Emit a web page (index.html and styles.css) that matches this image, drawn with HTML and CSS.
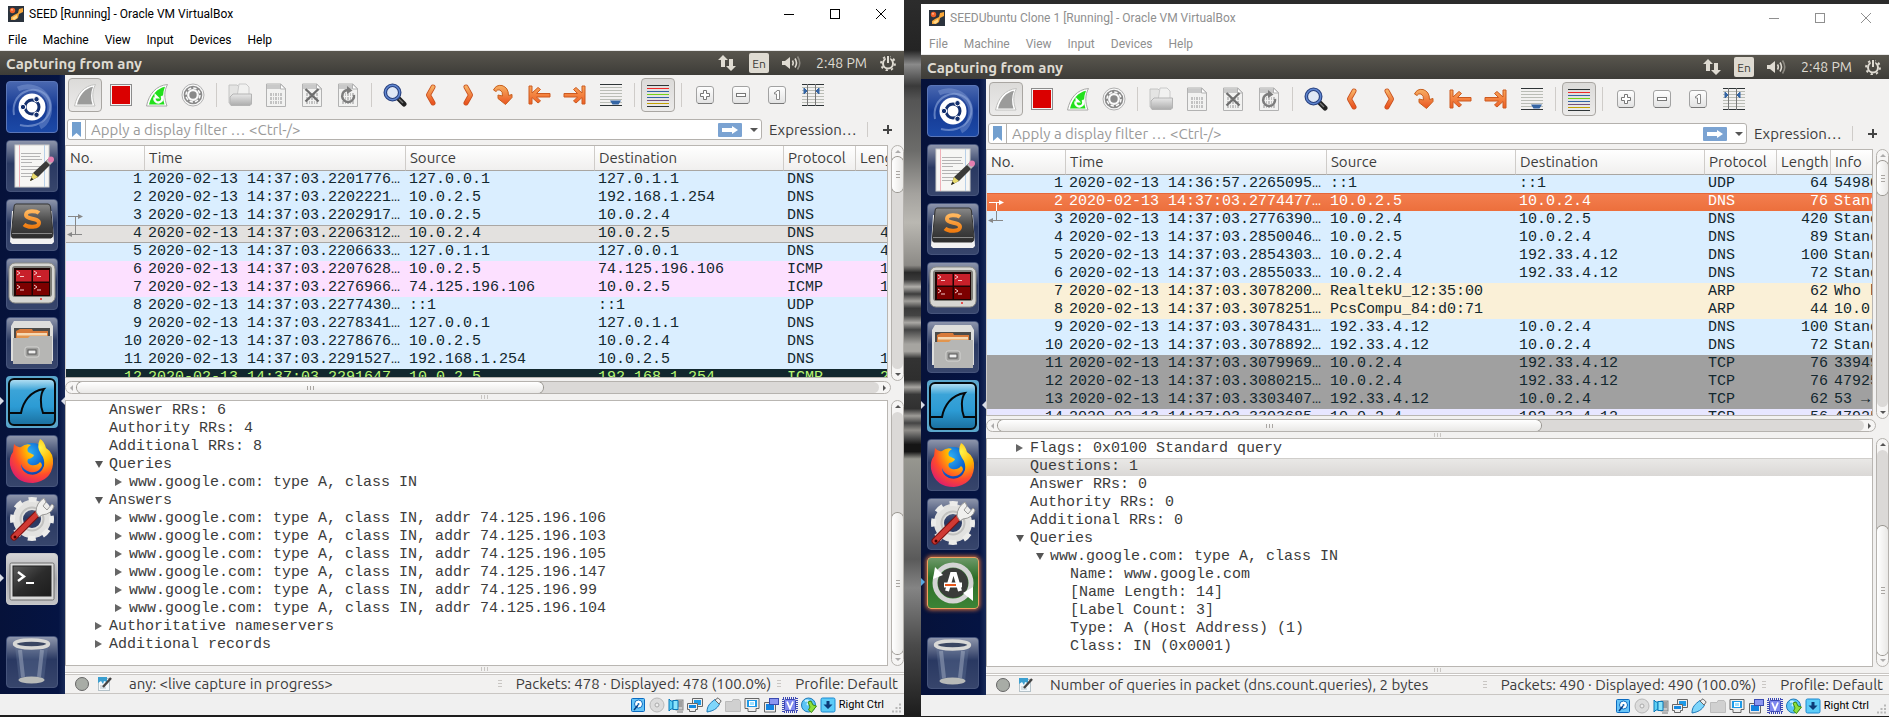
FILE: index.html
```html
<!DOCTYPE html>
<html lang="en">
<head>
<meta charset="utf-8">
<title>Capturing from any</title>
<link rel="stylesheet" href="styles.css">
</head>
<body>
<svg class="sprite" aria-hidden="true">
  <defs>
    <linearGradient id="g-orange" x1="0" y1="0" x2="0" y2="1"><stop offset="0" stop-color="#f7b064"/><stop offset="1" stop-color="#ea5420"/></linearGradient>
    <linearGradient id="g-orange-px" gradientUnits="userSpaceOnUse" x1="0" y1="2" x2="0" y2="22"><stop offset="0" stop-color="#f9a95c"/><stop offset="1" stop-color="#ee5a22"/></linearGradient>
    <linearGradient id="g-grey" x1="0" y1="0" x2="0" y2="1"><stop offset="0" stop-color="#e8e8e8"/><stop offset="1" stop-color="#acacac"/></linearGradient>
    <linearGradient id="g-key" x1="0" y1="0" x2="0" y2="1"><stop offset="0" stop-color="#fff"/><stop offset="1" stop-color="#e2e2e2"/></linearGradient>
    <linearGradient id="g-gloss" x1="0" y1="0" x2="0" y2="1"><stop offset="0" stop-color="#fff" stop-opacity=".5"/><stop offset=".45" stop-color="#fff" stop-opacity=".06"/><stop offset="1" stop-color="#fff" stop-opacity=".12"/></linearGradient>
    <linearGradient id="g-blue-tile" x1="0" y1="0" x2="0" y2="1"><stop offset="0" stop-color="#4a68b0"/><stop offset=".5" stop-color="#153a94"/><stop offset="1" stop-color="#1c4aa8"/></linearGradient>
    <linearGradient id="g-dark" x1="0" y1="0" x2="0" y2="1"><stop offset="0" stop-color="#8a8a8a"/><stop offset=".5" stop-color="#4a4a4a"/><stop offset="1" stop-color="#2c2c2c"/></linearGradient>
    <linearGradient id="g-shark" x1="0" y1="0" x2="0" y2="1"><stop offset="0" stop-color="#b9e2f4"/><stop offset=".25" stop-color="#3ba4d8"/><stop offset=".6" stop-color="#2c9bd4"/><stop offset="1" stop-color="#1a6f9e"/></linearGradient>
    <linearGradient id="g-steel" x1="0" y1="0" x2="0" y2="1"><stop offset="0" stop-color="#d6d6d8"/><stop offset=".5" stop-color="#a9a9ac"/><stop offset="1" stop-color="#c4c4c6"/></linearGradient>
    <linearGradient id="g-screen" x1="0" y1="0" x2="1" y2="1"><stop offset="0" stop-color="#5c5c5c"/><stop offset=".5" stop-color="#2c2c2c"/><stop offset="1" stop-color="#1c1c1c"/></linearGradient>
    <linearGradient id="g-green" x1="0" y1="0" x2="0" y2="1"><stop offset="0" stop-color="#6f9a6a"/><stop offset=".4" stop-color="#2c6e28"/><stop offset="1" stop-color="#3c8436"/></linearGradient>
    <linearGradient id="g-s" x1="0" y1="0" x2="0" y2="1"><stop offset="0" stop-color="#ffb75e"/><stop offset="1" stop-color="#f07c10"/></linearGradient>
    <radialGradient id="g-fox" cx=".7" cy=".2" r=".95"><stop offset="0" stop-color="#fff44a"/><stop offset=".35" stop-color="#ffb400"/><stop offset=".65" stop-color="#ff4a2c"/><stop offset="1" stop-color="#d4127e"/></radialGradient>
    <radialGradient id="g-globe" cx=".4" cy=".3" r=".8"><stop offset="0" stop-color="#2fb6f6"/><stop offset=".6" stop-color="#0a62d0"/><stop offset="1" stop-color="#1a2a8a"/></radialGradient>
  </defs>

  <symbol id="vbox" viewBox="0 0 16 16"><rect width="16" height="16" fill="#2b333d"/><path d="M3 14V11L6 9L10 7L11 3L15 2V6L11 8L10 12L7 14Z" fill="#f9a83a"/><path d="M4 12L9 9L9 12L6 14Z" fill="#ffd88a"/><circle cx="4.500" cy="4.500" r="2.700" fill="#f0622a"/><circle cx="4" cy="3.800" r="1" fill="#ffb08a"/></symbol>
  <symbol id="win-min" viewBox="0 0 10 10"><path d="M0 5.500H10" stroke="currentColor"/></symbol>
  <symbol id="win-max" viewBox="0 0 10 10"><rect x=".5" y=".5" width="9" height="9" fill="none" stroke="currentColor"/></symbol>
  <symbol id="win-close" viewBox="0 0 10 10"><path d="M0 0L10 10M10 0L0 10" stroke="currentColor"/></symbol>

  <symbol id="net" viewBox="0 0 18 18"><path d="M5 1L10 6H7V13H3V6H0Z" fill="#dfdbd2"/><path d="M13 17L18 12H15V5H11V12H8Z" fill="#dfdbd2"/></symbol>
  <symbol id="sound" viewBox="0 0 20 16"><path d="M0 6H3L8 2V14L3 10H0Z" fill="#dfdbd2"/><path d="M10.500 5.500Q12 8 10.500 10.500M13 3.500Q16 8 13 12.500" fill="none" stroke="#dfdbd2" stroke-width="1.600"/><path d="M15.500 1.500Q20 8 15.500 14.500" fill="none" stroke="#8d8a82" stroke-width="1.600"/></symbol>
  <symbol id="power" viewBox="0 0 16 16"><circle cx="8" cy="8.500" r="5" fill="none" stroke="#dfdbd2" stroke-width="2"/><circle cx="8" cy="8.500" r="6.900" fill="none" stroke="#dfdbd2" stroke-width="2" stroke-dasharray="2.300 3.120"/><path d="M8 0V8" stroke="#4a4842" stroke-width="4.500"/><path d="M8 1V8" stroke="#dfdbd2" stroke-width="2"/></symbol>

  <symbol id="t-fin" viewBox="0 0 24 24"><path d="M1.500 23C4 11 11 2.500 22.500 1.500C19 8 19 15 22 23Z" fill="#fff" stroke="#c2c2c0"/><path d="M4 21.500C6.500 12 12 5.500 20 3.800C17.500 10 17.500 16 19.500 21.500Z" fill="#9b9b9a"/></symbol>
  <symbol id="t-stop" viewBox="0 0 24 24"><rect x="1.500" y="1.500" width="21" height="21" fill="#f4f4f4" stroke="#8c8c8c"/><rect x="3" y="3" width="18" height="18" fill="#da0000"/></symbol>
  <symbol id="t-restart" viewBox="0 0 24 24"><path d="M1.500 23C4 11 11 2.500 22.500 1.500C19 8 19 15 22 23Z" fill="#fff" stroke="#a8a8a6"/><path d="M4 21.500C6.500 12 12 5.500 20 3.800C17.500 10 17.500 16 19.500 21.500Z" fill="#22e01c"/><path d="M9.500 14.500A4 4 0 1 0 16.500 13" fill="none" stroke="#fff" stroke-width="2.400"/><path d="M9.500 10V15.500H15Z" fill="#fff"/></symbol>
  <symbol id="t-gear" viewBox="0 0 24 24"><circle cx="12" cy="12" r="11" fill="#fafafa" stroke="#b0b0b0"/><circle cx="12" cy="12" r="9.300" fill="#8a8a8a"/><circle cx="12" cy="12" r="7" fill="none" stroke="#fafafa" stroke-width="1.500" stroke-dasharray="3.400 2.100"/><circle cx="12" cy="12" r="4.800" fill="none" stroke="#fafafa" stroke-width="2.200"/></symbol>
  <symbol id="t-open" viewBox="0 0 24 24"><path d="M1 2H9L12 5V20H1Z" fill="#e4e4e3" stroke="#c4c4c4"/><path d="M11 1H18L21 4V14H9Z" fill="#f1f1f0" stroke="#cacaca"/><path d="M5 11H23.500V21L22 22.500H3L2 21V14Z" fill="url(#g-grey)" stroke="#b4b4b4"/></symbol>
  <symbol id="t-doc" viewBox="0 0 24 24"><path d="M2.500 1H17L21.500 5.500V23.500H2.500Z" fill="#f2f2f1" stroke="#b2b2b2"/><path d="M3 1.500H16.500L18 6H3Z" fill="#c9c9c9"/><path d="M16.500 1V6H21.500Z" fill="#fff" stroke="#b2b2b2"/><path d="M6 11.500H19M6 15.500H19M6 19.500H19" stroke="#c2c2c2" stroke-width="3" stroke-dasharray="2 1 1 1"/></symbol>
  <symbol id="t-close" viewBox="0 0 24 24"><use href="#t-doc"/><path d="M5.500 6L18.500 18.500M18.500 6L5.500 18.500" stroke="#6e6e6e" stroke-width="2.400"/></symbol>
  <symbol id="t-reload" viewBox="0 0 24 24"><use href="#t-doc"/><path d="M12 7A6 6 0 1 0 18 12" fill="none" stroke="#7c7c7c" stroke-width="2.400"/><path d="M11 3L16.500 7.500L11 11Z" fill="#7c7c7c"/></symbol>
  <symbol id="t-find" viewBox="0 0 24 24"><path d="M15 15L21 21" stroke="#222" stroke-width="5" stroke-linecap="round"/><path d="M16 16L20 20" stroke="#777" stroke-width="1.500"/><circle cx="9.500" cy="9.500" r="7.200" fill="#dfe8f6" stroke="#28407e" stroke-width="3.600"/><circle cx="9.500" cy="9.500" r="7.200" fill="none" stroke="#5f86d0" stroke-width="1.400"/></symbol>
  <symbol id="t-prev" viewBox="0 0 24 24"><path d="M14 4L9.500 12L14 20" fill="none" stroke="#c8501e" stroke-width="5" stroke-linecap="round" stroke-linejoin="round"/><path d="M14 4L9.500 12L14 20" fill="none" stroke="url(#g-orange)" stroke-width="3.400" stroke-linecap="round" stroke-linejoin="round"/></symbol>
  <symbol id="t-next" viewBox="0 0 24 24"><path d="M11 4L15.500 12L11 20" fill="none" stroke="#c8501e" stroke-width="5" stroke-linecap="round" stroke-linejoin="round"/><path d="M11 4L15.500 12L11 20" fill="none" stroke="url(#g-orange)" stroke-width="3.400" stroke-linecap="round" stroke-linejoin="round"/></symbol>
  <symbol id="t-goto" viewBox="0 0 24 24"><path d="M2.500 7Q5 1.500 11 2.500Q17.500 4.500 17.500 12.500L21 11.500V14.500L14.500 21.500L7 15.500V12L11.500 13Q12 8.500 9 7Q6.500 6 5 8.500Z" fill="url(#g-orange)" stroke="#c8601e" stroke-linejoin="round"/></symbol>
  <symbol id="t-first" viewBox="0 0 24 24"><path d="M2 3H5V10L11 4.500L13.500 6.500L9.500 10.500H23V14H9.500L13.500 18L11 20L5 14.500V21H2Z" fill="url(#g-orange-px)" stroke="#cc5a20" stroke-linejoin="round"/></symbol>
  <symbol id="t-last" viewBox="0 0 24 24"><path d="M22 3H19V10L13 4.500L10.500 6.500L14.500 10.500H1V14H14.500L10.500 18L13 20L19 14.500V21H22Z" fill="url(#g-orange-px)" stroke="#cc5a20" stroke-linejoin="round"/></symbol>
  <symbol id="t-auto" viewBox="0 0 24 24"><path d="M1 1.500H23M1 22.500H23" stroke="#2e3436"/><path d="M1 4.500H23M1 7.500H23M1 10.500H23M1 13.500H23M1 16.500H23M1 19.500H23" stroke="#babdb6"/><path d="M11 17.500H22L19.500 21.500H13.500Z" fill="#3465a4"/></symbol>
  <symbol id="t-color" viewBox="0 0 24 24"><path d="M1 2.500H23M1 23.500H23" stroke="#2e3436"/><path d="M1 5.500H23" stroke="#ef2929"/><path d="M1 8.500H23" stroke="#3465a4"/><path d="M1 11.500H23" stroke="#73d216"/><path d="M1 14.500H23" stroke="#3465a4"/><path d="M1 17.500H23" stroke="#75507b"/><path d="M1 20.500H23" stroke="#c4a000"/></symbol>
  <symbol id="t-key" viewBox="0 0 24 24"><rect x="3.500" y="3.500" width="17" height="17" rx="2.500" fill="url(#g-key)" stroke="#a2a2a2"/><path d="M5 20.500H19" stroke="#777"/></symbol>
  <symbol id="t-plus" viewBox="0 0 24 24"><use href="#t-key"/><path d="M10.500 7.500H13.500V10.500H16.500V13.500H13.500V16.500H10.500V13.500H7.500V10.500H10.500Z" fill="#fff" stroke="#777"/></symbol>
  <symbol id="t-minus" viewBox="0 0 24 24"><use href="#t-key"/><rect x="7.500" y="10.500" width="9" height="3" fill="#fff" stroke="#777"/></symbol>
  <symbol id="t-one" viewBox="0 0 24 24"><use href="#t-key"/><path d="M12 7.500H14.500V16.500H11.500V11H9.500V9.500Q11.500 9.500 12 7.500Z" fill="#fff" stroke="#888"/></symbol>
  <symbol id="t-resize" viewBox="0 0 24 24"><path d="M1 1.500H23M1 22.500H23" stroke="#2e3436"/><path d="M1 4.500H23M1 7.500H23M1 10.500H23M1 13.500H23M1 16.500H23M1 19.500H23" stroke="#babdb6"/><path d="M6.500 1V23M14.500 1V23" stroke="#777"/><path d="M3 5V11L6 8ZM18 5V11L15 8Z" fill="#3465a4" stroke="#3465a4"/></symbol>

  <symbol id="mark" viewBox="0 0 9 15"><path d="M0 0H9V15L4.500 11L0 15Z" fill="#729fcf"/></symbol>
  <symbol id="apply" viewBox="0 0 24 14"><rect width="24" height="14" rx="1" fill="#7ba3d2"/><path d="M4 5H14V3L20 7L14 11V9H4Z" fill="#fff"/></symbol>
  <symbol id="link-start" viewBox="0 0 18 18"><path d="M2 9.500H13M9.500 9.500V18" fill="none" stroke="currentColor"/><path d="M12 7L17 9.500L12 12Z" fill="currentColor"/></symbol>
  <symbol id="link-end" viewBox="0 0 18 18"><path d="M16 9.500H5M9.500 0V9.500" fill="none" stroke="currentColor"/><path d="M6 7L1 9.500L6 12Z" fill="currentColor"/></symbol>
  <symbol id="note" viewBox="0 0 14 14"><rect x=".5" y="1.500" width="11" height="12" fill="#f3f8fb" stroke="#b5c2c9"/><path d="M0 0H9V5L6 4L5 7L3 4L0 6Z" fill="#3a9fd0"/><path d="M2 9H6M2 11H8" stroke="#b5c2c9"/><path d="M13 1L5 10" stroke="#444" stroke-width="2.400"/></symbol>

  <!-- launcher -->
  <symbol id="tile" viewBox="0 0 52 52"><rect x=".5" y=".5" width="51" height="51" rx="3.500" fill="#1c2c58" stroke="#46547b"/><rect x="1" y="1" width="50" height="50" rx="3" fill="url(#g-gloss)"/></symbol>
  <symbol id="l-dash" viewBox="0 0 52 52"><rect x=".5" y=".5" width="51" height="51" rx="3.500" fill="url(#g-blue-tile)" stroke="#5a76b8"/><path d="M8 34C4 12 28 2 40 14C52 28 38 50 14 44" fill="none" stroke="#8fa8dc" stroke-opacity=".6" stroke-width="2"/><path d="M12 8C28 0 50 14 42 36C40 42 38 44 34 46" fill="none" stroke="#8fa8dc" stroke-opacity=".4" stroke-width="5"/><circle cx="26" cy="26" r="13.500" fill="#fff"/><circle cx="26" cy="26" r="7" fill="none" stroke="#14306e" stroke-width="3"/><g fill="#14306e" stroke="#fff"><circle cx="17" cy="26" r="2.700"/><circle cx="30.500" cy="18.200" r="2.700"/><circle cx="30.500" cy="33.800" r="2.700"/></g></symbol>
  <symbol id="l-edit" viewBox="0 0 52 52"><use href="#tile"/><rect x="9" y="5" width="34" height="42" fill="#f6f6f4" stroke="#cfcfcc"/><path d="M13.500 5V47" stroke="#f0b0b8"/><path d="M38.500 5V47" stroke="#b8d0e8"/><path d="M15 13.500H35M15 16.500H34M15 19.500H36M15 22.500H26M15 26.500H36M15 29.500H34M15 33.500H30M15 36.500H26" stroke="#b4b4b4"/><path d="M24 41L27 33L42 19L46 23L32 37Z" fill="#3a3a38"/><path d="M24 41L27 33L32 37Z" fill="#e8da6a"/><path d="M24 41L25.500 37.500L27.500 39.500Z" fill="#222"/><path d="M40 21L43 18L47 22L44 25Z" fill="#bbb"/><circle cx="45" cy="19.500" r="3" fill="#e47fb0"/></symbol>
  <symbol id="l-subl" viewBox="0 0 52 52"><use href="#tile"/><path d="M6 12H46L48 43L46 45H6L4 43Z" fill="#f2f2f2"/><path d="M10 5H42Q44 5 44.500 8L47 34Q47 39 45 39H7Q5 39 5.500 34L8 8Q8 5 10 5Z" fill="url(#g-dark)" stroke="#333"/><path d="M6 34.500H46" stroke="#888"/><path d="M33 14C30 11.500 20 11 20 16C20 21 33 18.500 33 24C33 28.500 22 29 18 25.500" fill="none" stroke="url(#g-s)" stroke-width="4"/></symbol>
  <symbol id="l-multi" viewBox="0 0 52 52"><use href="#tile"/><rect x="3" y="5" width="46" height="40" rx="6" fill="#d6d6d2" stroke="#8c8c86"/><rect x="6" y="8" width="40" height="31" rx="3" fill="#7c7c76"/><rect x="8" y="10" width="36" height="28" fill="#1e0404"/><rect x="10" y="12" width="15.500" height="11.500" fill="#c8202a"/><rect x="27" y="12" width="16" height="11.500" fill="#c8202a"/><rect x="10" y="25" width="15.500" height="12" fill="#7c0000"/><rect x="27" y="25" width="16" height="12" fill="#7c0000"/><path d="M11 13L14 15L11 17M28 13L31 15L28 17M11 27L14 29L11 31M28 27L31 29L28 31M14 18.500H18M31 18.500H35M14 32H18M31 32H35" fill="none" stroke="#f4c8c8"/><circle cx="35" cy="41" r="1" fill="#e82020"/></symbol>
  <symbol id="l-files" viewBox="0 0 52 52"><use href="#tile"/><path d="M8 4H44L47 9V44H5V9Z" fill="#dededc"/><rect x="8" y="11" width="36" height="12" fill="#4c4c4a"/><path d="M10 14L14 12H26L27 14H42V22H10Z" fill="#d87a3a"/><path d="M11 16H41V22H11Z" fill="#f5d9b4"/><path d="M11 18.500H41V22H11Z" fill="#e2954e"/><path d="M7 21H22L24 19H46V47H7Z" fill="#b6b6b4"/><rect x="19" y="30" width="14" height="10" rx="2" fill="#9e9e9c" stroke="#d4d4d2"/><rect x="22" y="33" width="8" height="4" fill="#eee" stroke="#555"/></symbol>
  <symbol id="l-shark" viewBox="0 0 52 52"><rect width="52" height="52" rx="4" fill="#5aa6cc"/><rect x="3" y="3" width="46" height="46" rx="5" fill="url(#g-shark)" stroke="#05090c" stroke-width="2"/><path d="M4 37H15C17 26 24 15 38 13C34 18 34 29 37 37H48" fill="none" stroke="#05090c" stroke-width="2"/></symbol>
  <symbol id="l-fox" viewBox="0 0 52 52"><use href="#tile"/><circle cx="26" cy="25" r="17" fill="url(#g-globe)"/><path d="M8 9Q11 13 15 12Q20 8 25 10Q20 13 22 17L28 20Q27 23 22 24Q20 28 25 30Q31 31 34 27Q38 30 34 34Q30 38 24 37Q17 35 15 29Q15 36 22 39Q34 42 38 31Q39 24 35 19Q30 12 34 4Q38 6 40 13Q48 18 47 29Q45 46 27 48Q8 48 4 30Q3 22 7 17Z" fill="url(#g-fox)"/></symbol>
  <symbol id="l-set" viewBox="0 0 52 52"><use href="#tile"/><circle cx="26" cy="25" r="14" fill="none" stroke="#e2e2e0" stroke-width="10"/><circle cx="26" cy="25" r="19.500" fill="none" stroke="#ececea" stroke-width="5" stroke-dasharray="8 7.315" stroke-dashoffset="4"/><circle cx="26" cy="25" r="11.500" fill="none" stroke="#c2c2c0" stroke-width="2"/><path d="M8 43L31 20" stroke="#7c1010" stroke-width="7" stroke-linecap="round"/><path d="M8 43L31 20" stroke="#d03a34" stroke-width="5" stroke-linecap="round"/><path d="M30 18Q30 9 38 4L40 8L37 12L41 16L46 10L48 12Q46 20 36 21L33 23Z" fill="#f0f0ee" stroke="#9a9a98"/><circle cx="9" cy="43" r="1.500" fill="#400"/></symbol>
  <symbol id="l-term" viewBox="0 0 52 52"><rect x=".5" y=".5" width="51" height="51" rx="3.500" fill="url(#g-steel)" stroke="#c8c8ca"/><rect x="4" y="10" width="44" height="37" rx="1.500" fill="#dadada" stroke="#6e6e6e"/><rect x="7" y="13" width="38" height="30" fill="url(#g-screen)" stroke="#222"/><path d="M12 19L18 23.500L12 28" fill="none" stroke="#fff" stroke-width="2.400"/><path d="M20 30H28" stroke="#fff" stroke-width="2"/></symbol>
  <symbol id="l-upd" viewBox="0 0 52 52"><rect x=".5" y=".5" width="51" height="51" rx="3.500" fill="url(#g-green)" stroke="#f0a060"/><circle cx="26" cy="26" r="15" fill="#3a3c3a"/><circle cx="26" cy="26" r="18" fill="none" stroke="#d4d4d4" stroke-width="5"/><path d="M6 22L8 10L16 18ZM46 30L46 44L36 36Z" fill="#fff"/><path d="M20 34L25 17H28L33 34" fill="none" stroke="#fff" stroke-width="4"/><path d="M17 28H35" stroke="#fff" stroke-width="5"/><path d="M18 28H29" stroke="#e8581c" stroke-width="2"/></symbol>
  <symbol id="l-trash" viewBox="0 0 52 52"><use href="#tile"/><path d="M9 10L13 44Q25 50 38 44L42 10Z" fill="#6f84a4" fill-opacity=".3"/><path d="M14 14L17 41M36 14L33 41" stroke="#dfe6f0" stroke-opacity=".3" stroke-width="4"/><ellipse cx="25.500" cy="44" rx="13" ry="3.500" fill="#b8bab8"/><ellipse cx="25.500" cy="8" rx="17" ry="4" fill="#3a4662" stroke="#d8d8d6" stroke-width="3.400"/></symbol>

  <!-- machine status bar -->
  <symbol id="s-disk" viewBox="0 0 16 16"><rect x="1.500" y="1.500" width="13" height="13" rx="1" fill="#66c4f8" stroke="#0a6ac0"/><circle cx="8.500" cy="7" r="4" fill="#fff" stroke="#0a6ac0"/><circle cx="8.500" cy="7" r="1" fill="#0a6ac0"/><path d="M4 13L8 8" stroke="#0a3a80" stroke-width="1.500"/></symbol>
  <symbol id="s-cd" viewBox="0 0 16 16"><circle cx="8" cy="8" r="7" fill="#dcdcdc" stroke="#b8b8b8"/><circle cx="8" cy="8" r="2" fill="#eee" stroke="#aaa"/></symbol>
  <symbol id="s-audio" viewBox="0 0 16 16"><rect x="8" y="3" width="7" height="10" fill="#c8c8c8" stroke="#888"/><path d="M10 5H14M10 7H14M10 9H14M9 15H15" stroke="#777"/><path d="M1 2L3 4H5V12H3L1 14Z" fill="#5cd0f4" stroke="#0a78b8"/><path d="M5 3.500H10V12.500H5Z" fill="#8ae4fb" stroke="#0a78b8"/></symbol>
  <symbol id="s-net" viewBox="0 0 16 16"><path d="M5.500 1.500H15.500V9.500H5.500Z" fill="#eee" stroke="#666"/><rect x="7" y="3" width="7" height="5" fill="#1e9ae8"/><path d="M.5 6.500H10.500V12.500H8.500V14.500H2.500V12.500H.5Z" fill="#eee" stroke="#666"/><rect x="2" y="8" width="7" height="3" fill="#1488e0"/></symbol>
  <symbol id="s-usb" viewBox="0 0 16 16"><path d="M1 15C1 9 4 6 9 2.500L13.500 7C11 12 7 14 1 15Z" fill="#7fd6fb" stroke="#1c78b8"/><path d="M9 3L12 .8L15.200 4L13 7Z" fill="#eee" stroke="#666"/></symbol>
  <symbol id="s-folder" viewBox="0 0 16 16"><path d="M.5 4.500H7L8 2.500H14L15.500 4.500V14.500H.5Z" fill="#d0d0d0" stroke="#bcbcbc"/></symbol>
  <symbol id="s-disp" viewBox="0 0 16 16"><path d="M1 1.500H15V11.500H12V14.500H4V11.500H1Z" fill="#eee" stroke="#666"/><rect x="3" y="3" width="10" height="7" fill="#1e9ae8"/><rect x="5.500" y="4.500" width="5" height="4" fill="#9fe0ff" stroke="#fff"/></symbol>
  <symbol id="s-rec" viewBox="0 0 16 16"><path d="M1.500 5.500H12.500V15H1.500Z" fill="#eee" stroke="#666"/><rect x="3" y="7" width="8" height="6" fill="#1484e0"/><rect x="6.500" y="1.500" width="9" height="6" fill="#8c96f0" stroke="#3a4ab0"/></symbol>
  <symbol id="s-cpu" viewBox="0 0 16 16"><rect x="1" y="1" width="14" height="14" fill="none" stroke="#3c48b4" stroke-width="2" stroke-dasharray="1 1"/><rect x="2.500" y="2.500" width="11" height="11" rx="1" fill="#7f88ee" stroke="#3c48b4"/><path d="M5 4.500L8 11.500L11 4.500" fill="none" stroke="#fff" stroke-width="1.800"/></symbol>
  <symbol id="s-mouse" viewBox="0 0 16 16"><circle cx="7.500" cy="8" r="7" fill="#5cc4f4" stroke="#1c78b8"/><path d="M4 4C8 2 8 6 6 8" fill="none" stroke="#c8f0ff" stroke-width="2"/><path d="M7 5L10 4L12 8L15.500 9L10.500 15.500L7.500 13L9 10Z" fill="#8ee03a" stroke="#3c8a10"/></symbol>
  <symbol id="s-key" viewBox="0 0 16 16"><rect x="1" y="1" width="14" height="14" rx="1.500" fill="#5cccf8" stroke="#1c88d0"/><path d="M6.500 4H9.500V7.500H12.500L8 12L3.500 7.500H6.500Z" fill="#0c3a78"/></symbol>
  <symbol id="s-grip" viewBox="0 0 10 10"><path d="M8 1.500H10M8 5H10M8 8.500H10M4.500 5H6.500M4.500 8.500H6.500M1 8.500H3" stroke="#b8b8b8" stroke-width="2"/></symbol>
</svg>

<main class="desktop">

<section class="vm vm--active">
  <header class="titlebar">
    <svg class="i16"><use href="#vbox"/></svg>
    <h1>SEED [Running] - Oracle VM VirtualBox</h1>
    <div class="wincontrols">
      <button aria-label="Minimize"><svg><use href="#win-min"/></svg></button>
      <button aria-label="Maximize"><svg><use href="#win-max"/></svg></button>
      <button aria-label="Close"><svg><use href="#win-close"/></svg></button>
    </div>
  </header>
  <nav class="menubar"><button>File</button><button>Machine</button><button>View</button><button>Input</button><button>Devices</button><button>Help</button></nav>
  <div class="panel">
    <strong>Capturing from any</strong>
    <div class="indicators">
      <svg class="ind-net"><use href="#net"/></svg><span class="lang">En</span><svg class="ind-sound"><use href="#sound"/></svg><time>2:48 PM</time><svg class="i16"><use href="#power"/></svg>
    </div>
  </div>
  <div class="session">
    <nav class="launcher">
      <a href="#" aria-label="Dash"><svg><use href="#l-dash"/></svg></a>
      <a href="#" aria-label="Text editor"><svg><use href="#l-edit"/></svg></a>
      <a href="#" aria-label="Sublime"><svg><use href="#l-subl"/></svg></a>
      <a href="#" aria-label="Terminator"><svg><use href="#l-multi"/></svg></a>
      <a href="#" aria-label="Files"><svg><use href="#l-files"/></svg></a>
      <a href="#" aria-label="Wireshark" class="running focused"><svg><use href="#l-shark"/></svg></a>
      <a href="#" aria-label="Firefox"><svg><use href="#l-fox"/></svg></a>
      <a href="#" aria-label="Settings"><svg><use href="#l-set"/></svg></a>
      <a href="#" aria-label="Terminal" class="running"><svg><use href="#l-term"/></svg></a>
      <a href="#" aria-label="Trash" class="trash"><svg><use href="#l-trash"/></svg></a>
    </nav>
    <div class="app">
      <div class="toolbar">
        <button class="on" aria-label="Start"><svg><use href="#t-fin"/></svg></button>
        <button aria-label="Stop"><svg><use href="#t-stop"/></svg></button>
        <button aria-label="Restart"><svg><use href="#t-restart"/></svg></button>
        <button aria-label="Options"><svg><use href="#t-gear"/></svg></button>
        <i></i>
        <button aria-label="Open"><svg><use href="#t-open"/></svg></button>
        <button aria-label="Save"><svg><use href="#t-doc"/></svg></button>
        <button aria-label="Close file"><svg><use href="#t-close"/></svg></button>
        <button aria-label="Reload"><svg><use href="#t-reload"/></svg></button>
        <i></i>
        <button aria-label="Find"><svg><use href="#t-find"/></svg></button>
        <button aria-label="Previous"><svg><use href="#t-prev"/></svg></button>
        <button aria-label="Next"><svg><use href="#t-next"/></svg></button>
        <button aria-label="Go to"><svg><use href="#t-goto"/></svg></button>
        <button aria-label="First"><svg><use href="#t-first"/></svg></button>
        <button aria-label="Last"><svg><use href="#t-last"/></svg></button>
        <button aria-label="Auto scroll"><svg><use href="#t-auto"/></svg></button>
        <i></i>
        <button class="on" aria-label="Colorize"><svg><use href="#t-color"/></svg></button>
        <i></i>
        <button aria-label="Zoom in"><svg><use href="#t-plus"/></svg></button>
        <button aria-label="Zoom out"><svg><use href="#t-minus"/></svg></button>
        <button aria-label="Normal size"><svg><use href="#t-one"/></svg></button>
        <button aria-label="Resize columns"><svg><use href="#t-resize"/></svg></button>
      </div>
      <div class="filterbar">
        <div class="filter">
          <button class="mark" aria-label="Bookmarks"><svg><use href="#mark"/></svg></button>
          <input type="text" aria-label="Display filter" placeholder="Apply a display filter … &lt;Ctrl-/&gt;">
          <button class="apply" aria-label="Apply"><svg><use href="#apply"/></svg></button>
          <button class="drop" aria-label="Recent filters"></button>
        </div>
        <button class="expr">Expression…</button>
        <button class="add" aria-label="Add filter button"></button>
      </div>
      <div class="panes">
        <div class="list list--short">
          <div class="grid">
            <table>
              <colgroup><col class="c-no"><col class="c-time"><col class="c-addr"><col class="c-addr"><col class="c-proto"><col class="c-len"></colgroup>
              <thead><tr><th>No.</th><th>Time</th><th>Source</th><th>Destination</th><th>Protocol</th><th>Length</th></tr></thead>
              <tbody>
                <tr class="dns"><td>1</td><td>2020-02-13 14:37:03.2201776…</td><td>127.0.0.1</td><td>127.0.1.1</td><td>DNS</td><td>76</td></tr>
                <tr class="dns"><td>2</td><td>2020-02-13 14:37:03.2202221…</td><td>10.0.2.5</td><td>192.168.1.254</td><td>DNS</td><td>76</td></tr>
                <tr class="dns"><td><svg class="rel"><use href="#link-start"/></svg>3</td><td>2020-02-13 14:37:03.2202917…</td><td>10.0.2.5</td><td>10.0.2.4</td><td>DNS</td><td>76</td></tr>
                <tr class="dns picked"><td><svg class="rel"><use href="#link-end"/></svg>4</td><td>2020-02-13 14:37:03.2206312…</td><td>10.0.2.4</td><td>10.0.2.5</td><td>DNS</td><td>420</td></tr>
                <tr class="dns"><td>5</td><td>2020-02-13 14:37:03.2206633…</td><td>127.0.1.1</td><td>127.0.0.1</td><td>DNS</td><td>420</td></tr>
                <tr class="icmp"><td>6</td><td>2020-02-13 14:37:03.2207628…</td><td>10.0.2.5</td><td>74.125.196.106</td><td>ICMP</td><td>100</td></tr>
                <tr class="icmp"><td>7</td><td>2020-02-13 14:37:03.2276966…</td><td>74.125.196.106</td><td>10.0.2.5</td><td>ICMP</td><td>100</td></tr>
                <tr class="dns"><td>8</td><td>2020-02-13 14:37:03.2277430…</td><td>::1</td><td>::1</td><td>UDP</td><td>64</td></tr>
                <tr class="dns"><td>9</td><td>2020-02-13 14:37:03.2278341…</td><td>127.0.0.1</td><td>127.0.1.1</td><td>DNS</td><td>89</td></tr>
                <tr class="dns"><td>10</td><td>2020-02-13 14:37:03.2278676…</td><td>10.0.2.5</td><td>10.0.2.4</td><td>DNS</td><td>89</td></tr>
                <tr class="dns"><td>11</td><td>2020-02-13 14:37:03.2291527…</td><td>192.168.1.254</td><td>10.0.2.5</td><td>DNS</td><td>100</td></tr>
                <tr class="err"><td>12</td><td>2020-02-13 14:37:03.2291647…</td><td>10.0.2.5</td><td>192.168.1.254</td><td>ICMP</td><td>200</td></tr>
              </tbody>
            </table>
          </div>
          <div class="sb sb--v"><b class="up dim"></b><div class="trough"><span style="flex-grow:34"></span><em style="flex-grow:174"></em></div><b class="down"></b></div>
          <div class="sb sb--h"><b class="left dim"></b><div class="trough"><span style="flex-grow:465"></span><em style="flex-grow:335"></em></div><b class="right"></b></div>
        </div>
        <div class="split"></div>
        <div class="detail detail--tall">
          <ul class="tree">
            <li>Answer RRs: 6</li>
            <li>Authority RRs: 4</li>
            <li>Additional RRs: 8</li>
            <li class="open">Queries</li>
            <li class="shut d2">www.google.com: type A, class IN</li>
            <li class="open">Answers</li>
            <li class="shut d2">www.google.com: type A, class IN, addr 74.125.196.106</li>
            <li class="shut d2">www.google.com: type A, class IN, addr 74.125.196.103</li>
            <li class="shut d2">www.google.com: type A, class IN, addr 74.125.196.105</li>
            <li class="shut d2">www.google.com: type A, class IN, addr 74.125.196.147</li>
            <li class="shut d2">www.google.com: type A, class IN, addr 74.125.196.99</li>
            <li class="shut d2">www.google.com: type A, class IN, addr 74.125.196.104</li>
            <li class="shut">Authoritative nameservers</li>
            <li class="shut">Additional records</li>
          </ul>
          <div class="sb sb--v"><b class="up"></b><div class="trough"><em style="flex-grow:100"></em><span style="flex-grow:139"></span></div><b class="down dim"></b></div>
        </div>
        <div class="split"></div>
      </div>
      <footer class="status">
        <span class="expert"></span><svg class="i14"><use href="#note"/></svg>
        <p>any: &lt;live capture in progress&gt;</p>
        <span class="counts">Packets: 478 · Displayed: 478 (100.0%)</span>
        <span class="profile">Profile: Default</span>
      </footer>
    </div>
  </div>
  <footer class="vmbar">
    <svg class="i16"><use href="#s-disk"/></svg><svg class="i16"><use href="#s-cd"/></svg><svg class="i16"><use href="#s-audio"/></svg><svg class="i16"><use href="#s-net"/></svg><svg class="i16"><use href="#s-usb"/></svg><svg class="i16"><use href="#s-folder"/></svg><svg class="i16"><use href="#s-disp"/></svg><svg class="i16"><use href="#s-rec"/></svg><svg class="i16"><use href="#s-cpu"/></svg><svg class="i16"><use href="#s-mouse"/></svg><svg class="i16"><use href="#s-key"/></svg>
    <span>Right Ctrl</span><svg class="grip"><use href="#s-grip"/></svg>
  </footer>
</section>

<section class="vm vm--idle">
  <header class="titlebar">
    <svg class="i16"><use href="#vbox"/></svg>
    <h1>SEEDUbuntu Clone 1 [Running] - Oracle VM VirtualBox</h1>
    <div class="wincontrols">
      <button aria-label="Minimize"><svg><use href="#win-min"/></svg></button>
      <button aria-label="Maximize"><svg><use href="#win-max"/></svg></button>
      <button aria-label="Close"><svg><use href="#win-close"/></svg></button>
    </div>
  </header>
  <nav class="menubar"><button>File</button><button>Machine</button><button>View</button><button>Input</button><button>Devices</button><button>Help</button></nav>
  <div class="panel">
    <strong>Capturing from any</strong>
    <div class="indicators">
      <svg class="ind-net"><use href="#net"/></svg><span class="lang">En</span><svg class="ind-sound"><use href="#sound"/></svg><time>2:48 PM</time><svg class="i16"><use href="#power"/></svg>
    </div>
  </div>
  <div class="session">
    <nav class="launcher">
      <a href="#" aria-label="Dash"><svg><use href="#l-dash"/></svg></a>
      <a href="#" aria-label="Text editor"><svg><use href="#l-edit"/></svg></a>
      <a href="#" aria-label="Sublime"><svg><use href="#l-subl"/></svg></a>
      <a href="#" aria-label="Terminator"><svg><use href="#l-multi"/></svg></a>
      <a href="#" aria-label="Files"><svg><use href="#l-files"/></svg></a>
      <a href="#" aria-label="Wireshark" class="running focused"><svg><use href="#l-shark"/></svg></a>
      <a href="#" aria-label="Firefox"><svg><use href="#l-fox"/></svg></a>
      <a href="#" aria-label="Settings"><svg><use href="#l-set"/></svg></a>
      <a href="#" aria-label="Software updater" class="running urgent"><svg><use href="#l-upd"/></svg></a>
      <a href="#" aria-label="Trash" class="trash"><svg><use href="#l-trash"/></svg></a>
    </nav>
    <div class="app">
      <div class="toolbar">
        <button class="on" aria-label="Start"><svg><use href="#t-fin"/></svg></button>
        <button aria-label="Stop"><svg><use href="#t-stop"/></svg></button>
        <button aria-label="Restart"><svg><use href="#t-restart"/></svg></button>
        <button aria-label="Options"><svg><use href="#t-gear"/></svg></button>
        <i></i>
        <button aria-label="Open"><svg><use href="#t-open"/></svg></button>
        <button aria-label="Save"><svg><use href="#t-doc"/></svg></button>
        <button aria-label="Close file"><svg><use href="#t-close"/></svg></button>
        <button aria-label="Reload"><svg><use href="#t-reload"/></svg></button>
        <i></i>
        <button aria-label="Find"><svg><use href="#t-find"/></svg></button>
        <button aria-label="Previous"><svg><use href="#t-prev"/></svg></button>
        <button aria-label="Next"><svg><use href="#t-next"/></svg></button>
        <button aria-label="Go to"><svg><use href="#t-goto"/></svg></button>
        <button aria-label="First"><svg><use href="#t-first"/></svg></button>
        <button aria-label="Last"><svg><use href="#t-last"/></svg></button>
        <button aria-label="Auto scroll"><svg><use href="#t-auto"/></svg></button>
        <i></i>
        <button class="on" aria-label="Colorize"><svg><use href="#t-color"/></svg></button>
        <i></i>
        <button aria-label="Zoom in"><svg><use href="#t-plus"/></svg></button>
        <button aria-label="Zoom out"><svg><use href="#t-minus"/></svg></button>
        <button aria-label="Normal size"><svg><use href="#t-one"/></svg></button>
        <button aria-label="Resize columns"><svg><use href="#t-resize"/></svg></button>
      </div>
      <div class="filterbar">
        <div class="filter">
          <button class="mark" aria-label="Bookmarks"><svg><use href="#mark"/></svg></button>
          <input type="text" aria-label="Display filter" placeholder="Apply a display filter … &lt;Ctrl-/&gt;">
          <button class="apply" aria-label="Apply"><svg><use href="#apply"/></svg></button>
          <button class="drop" aria-label="Recent filters"></button>
        </div>
        <button class="expr">Expression…</button>
        <button class="add" aria-label="Add filter button"></button>
      </div>
      <div class="panes">
        <div class="list list--tall">
          <div class="grid">
            <table>
              <colgroup><col class="c-no"><col class="c-time"><col class="c-addr"><col class="c-addr"><col class="c-proto"><col class="c-len"><col class="c-info"></colgroup>
              <thead><tr><th>No.</th><th>Time</th><th>Source</th><th>Destination</th><th>Protocol</th><th>Length</th><th>Info</th></tr></thead>
              <tbody>
                <tr class="dns"><td>1</td><td>2020-02-13 14:36:57.2265095…</td><td>::1</td><td>::1</td><td>UDP</td><td>64</td><td>54980</td></tr>
                <tr class="selected"><td><svg class="rel"><use href="#link-start"/></svg>2</td><td>2020-02-13 14:37:03.2774477…</td><td>10.0.2.5</td><td>10.0.2.4</td><td>DNS</td><td>76</td><td>Stand</td></tr>
                <tr class="dns"><td><svg class="rel"><use href="#link-end"/></svg>3</td><td>2020-02-13 14:37:03.2776390…</td><td>10.0.2.4</td><td>10.0.2.5</td><td>DNS</td><td>420</td><td>Stand</td></tr>
                <tr class="dns"><td>4</td><td>2020-02-13 14:37:03.2850046…</td><td>10.0.2.5</td><td>10.0.2.4</td><td>DNS</td><td>89</td><td>Stand</td></tr>
                <tr class="dns"><td>5</td><td>2020-02-13 14:37:03.2854303…</td><td>10.0.2.4</td><td>192.33.4.12</td><td>DNS</td><td>100</td><td>Stand</td></tr>
                <tr class="dns"><td>6</td><td>2020-02-13 14:37:03.2855033…</td><td>10.0.2.4</td><td>192.33.4.12</td><td>DNS</td><td>72</td><td>Stand</td></tr>
                <tr class="arp"><td>7</td><td>2020-02-13 14:37:03.3078200…</td><td>RealtekU_12:35:00</td><td></td><td>ARP</td><td>62</td><td>Who h</td></tr>
                <tr class="arp"><td>8</td><td>2020-02-13 14:37:03.3078251…</td><td>PcsCompu_84:d0:71</td><td></td><td>ARP</td><td>44</td><td>10.0.</td></tr>
                <tr class="dns"><td>9</td><td>2020-02-13 14:37:03.3078431…</td><td>192.33.4.12</td><td>10.0.2.4</td><td>DNS</td><td>100</td><td>Stand</td></tr>
                <tr class="dns"><td>10</td><td>2020-02-13 14:37:03.3078892…</td><td>192.33.4.12</td><td>10.0.2.4</td><td>DNS</td><td>72</td><td>Stand</td></tr>
                <tr class="syn"><td>11</td><td>2020-02-13 14:37:03.3079969…</td><td>10.0.2.4</td><td>192.33.4.12</td><td>TCP</td><td>76</td><td>33949</td></tr>
                <tr class="syn"><td>12</td><td>2020-02-13 14:37:03.3080215…</td><td>10.0.2.4</td><td>192.33.4.12</td><td>TCP</td><td>76</td><td>47925</td></tr>
                <tr class="syn"><td>13</td><td>2020-02-13 14:37:03.3303407…</td><td>192.33.4.12</td><td>10.0.2.4</td><td>TCP</td><td>62</td><td>53 →</td></tr>
                <tr class="tcp"><td>14</td><td>2020-02-13 14:37:03.3303685…</td><td>10.0.2.4</td><td>192.33.4.12</td><td>TCP</td><td>56</td><td>47925</td></tr>
              </tbody>
            </table>
          </div>
          <div class="sb sb--v"><b class="up dim"></b><div class="trough"><span style="flex-grow:34"></span><em style="flex-grow:209"></em></div><b class="down"></b></div>
          <div class="sb sb--h"><b class="left dim"></b><div class="trough"><span style="flex-grow:541"></span><em style="flex-grow:322"></em></div><b class="right"></b></div>
        </div>
        <div class="split"></div>
        <div class="detail detail--short">
          <ul class="tree">
            <li class="shut">Flags: 0x0100 Standard query</li>
            <li class="current">Questions: 1</li>
            <li>Answer RRs: 0</li>
            <li>Authority RRs: 0</li>
            <li>Additional RRs: 0</li>
            <li class="open">Queries</li>
            <li class="open d2">www.google.com: type A, class IN</li>
            <li class="d3">Name: www.google.com</li>
            <li class="d3">[Name Length: 14]</li>
            <li class="d3">[Label Count: 3]</li>
            <li class="d3">Type: A (Host Address) (1)</li>
            <li class="d3">Class: IN (0x0001)</li>
          </ul>
          <div class="sb sb--v"><b class="up"></b><div class="trough"><em style="flex-grow:75"></em><span style="flex-grow:128"></span></div><b class="down dim"></b></div>
        </div>
        <div class="split"></div>
      </div>
      <footer class="status">
        <span class="expert"></span><svg class="i14"><use href="#note"/></svg>
        <p>Number of queries in packet (dns.count.queries), 2 bytes</p>
        <span class="counts">Packets: 490 · Displayed: 490 (100.0%)</span>
        <span class="profile">Profile: Default</span>
      </footer>
    </div>
  </div>
  <footer class="vmbar">
    <svg class="i16"><use href="#s-disk"/></svg><svg class="i16"><use href="#s-cd"/></svg><svg class="i16"><use href="#s-audio"/></svg><svg class="i16"><use href="#s-net"/></svg><svg class="i16"><use href="#s-usb"/></svg><svg class="i16"><use href="#s-folder"/></svg><svg class="i16"><use href="#s-disp"/></svg><svg class="i16"><use href="#s-rec"/></svg><svg class="i16"><use href="#s-cpu"/></svg><svg class="i16"><use href="#s-mouse"/></svg><svg class="i16"><use href="#s-key"/></svg>
    <span>Right Ctrl</span><svg class="grip"><use href="#s-grip"/></svg>
  </footer>
</section>

</main>
</body>
</html>
```

FILE: styles.css
```css
:root {
  --ui: Ubuntu, "Noto Sans", "Open Sans", sans-serif;
  --win: "Segoe UI", Roboto, "Noto Sans", sans-serif;
  --mono: "Liberation Mono", monospace;
  --line: #b9b6b2;
  --chrome: #f2f1f0;
  --text: #3c3c3c;
}

* { box-sizing: border-box; }

body { margin: 0; font-family: var(--ui); font-size: 15px; color: var(--text); }

button {
  margin: 0;
  padding: 0;
  border: 0;
  background: none;
  font: inherit;
  color: inherit;
}

svg { display: block; flex: none; }
.sprite { position: absolute; width: 0; height: 0; }
.i16 { width: 16px; height: 16px; }
.i14 { width: 14px; height: 14px; }

.desktop {
  display: grid;
  grid-template-columns: minmax(0, 904fr) minmax(0, 968fr);
  gap: 17px;
  height: 100vh;
  overflow: hidden;
  background:
    linear-gradient(#2c2c2c 0, #242424 7%, #8a8a8a 9%, #3a3a3a 12%, #555 14%, #6c6c6a 21%, #a4a29e 27%, #bab8b2 31%, #8c8a86 37%, #2a2a2a 38%, #3a3a3a 39%, #b0aeaa 40%, #3c3c3c 41%, #a09e9a 42%, #3a3a3a 43%, #444 44%, #aaa8a4 45%, #444 46%, #a6a4a0 48%, #a6a4a0 49%, #333 50%, #2e2e2e 53%, #a8a6a2 54%, #383838 55%, #303030 57%, #9e9c98 58%, #444 59%, #8e8c88 60%, #505050 61%, #151515 62%, #151515 63%, #96968f 64%, #7c7c7a 72%, #5a5a5a 78%, #848484 82%, #4a4a4a 90%, #1c1c1c 100%);
}

.vm { display: flex; flex-direction: column; min-width: 0; min-height: 0; background: #fff; }
.vm--active { margin-bottom: 2px; color: #000; }
.vm--idle { margin: 4px 0 1px; color: #8f8f8f; }

/* host window chrome */
.titlebar { display: flex; align-items: center; gap: 5px; height: 28px; padding-left: 8px; font-family: var(--win); font-size: 12px; }
.titlebar h1 { flex: 1; margin: 0; font-size: 12px; font-weight: 400; white-space: nowrap; }
.wincontrols { display: flex; }
.wincontrols button { display: grid; place-items: center; width: 46px; height: 28px; }
.wincontrols svg { width: 10px; height: 10px; }
.menubar { display: flex; gap: 16px; height: 23px; padding: 2px 8px 0; border-bottom: 1px solid #e8e8e8; font-family: var(--win); font-size: 12px; }

.panel { display: flex; align-items: center; justify-content: space-between; height: 24px; padding: 0 8px 0 6px; background: linear-gradient(#59564e, #3d3c38); color: #dfdbd2; }
.indicators { display: flex; align-items: center; }
.ind-net { width: 18px; height: 18px; margin-right: 13px; }
.lang { width: 20px; height: 20px; margin-right: 13px; border-radius: 2px; background: #dfdbd2; color: #3d3c38; font-size: 12px; line-height: 21px; text-align: center; }
.ind-sound { width: 20px; height: 16px; margin-right: 14px; }
.indicators time { margin-right: 13px; font-size: 14px; }

.session { display: flex; flex: 1; min-height: 0; color: var(--text); }

.launcher { display: flex; flex: none; flex-direction: column; gap: 7px; width: 65px; padding: 6px; background: linear-gradient(90deg, #06123a, #051443 90%, #182a58); }
.launcher a { position: relative; width: 52px; height: 52px; flex: none; }
.launcher svg { width: 52px; height: 52px; }
.launcher .trash { margin-top: auto; }
.running::before, .focused::after { content: ""; position: absolute; top: 21px; border: 4px solid transparent; }
.running::before { left: -6px; border-left-color: #d8dce6; }
.focused::after { right: -7px; border-right-color: #d8dce6; }
.urgent::before { border-left-color: #58a8e0; }
.urgent svg { border-radius: 4px; overflow: visible; box-shadow: 0 0 4px 1px #d8703a; }

.app { display: flex; flex: 1; flex-direction: column; min-width: 0; background: var(--chrome); }

.toolbar { display: flex; gap: 2px; padding: 3px 3px 7px; }
.toolbar button { display: grid; place-items: center; width: 34px; height: 34px; flex: none; border: 1px solid transparent; border-radius: 4px; }
.toolbar .on { border-color: #a9a6a2; background: linear-gradient(#dcdbd9, #ecebea); }
.toolbar svg { width: 24px; height: 24px; }
.toolbar i { width: 9px; height: 24px; margin-top: 5px; flex: none; background: linear-gradient(90deg, transparent 4px, #cfccc9 4px, #cfccc9 5px, transparent 5px); }

.filterbar { display: flex; align-items: center; height: 21px; margin: 0 12px 5px 2px; }
.filter { display: flex; flex: 1; align-items: center; height: 21px; border: 1px solid #b4b1ad; border-radius: 3px; background: #fff; }
.mark { display: grid; place-items: center; width: 18px; height: 19px; border-right: 1px solid #b4b1ad; }
.mark svg { width: 9px; height: 15px; }
.filter input { flex: 1; min-width: 0; height: 19px; padding: 0 5px; border: 0; background: none; font: inherit; outline: 0; }
.filter input::placeholder { color: #9a9a9a; }
.apply svg { width: 24px; height: 14px; }
.drop { width: 19px; height: 19px; display: grid; place-items: center; }
.drop::before { content: ""; margin: 4px 0 0 5px; border: 4px solid transparent; border-top-color: #555; }
.expr { width: 99px; margin-left: 7px; height: 15px; border-right: 1px solid #cfccc9; line-height: 15px; text-align: left; white-space: nowrap; }
.add { width: 9px; height: 9px; margin-left: 15px; background: linear-gradient(#444, #444) center / 9px 2px no-repeat, linear-gradient(#444, #444) center / 2px 9px no-repeat; }

.panes { display: flex; flex: 1; flex-direction: column; min-height: 0; }
.list { display: grid; grid-template: minmax(0, 1fr) 3px 13px / minmax(0, 1fr) 3px 13px; min-height: 0; }
.list--short { flex: 249 0 0; }
.list--tall { flex: 283 0 0; }
.detail { display: flex; gap: 3px; min-height: 0; }
.detail--tall { flex: 266 0 0; }
.detail--short { flex: 229 0 0; }
.split { flex: none; height: 6px; background: repeating-linear-gradient(90deg, #c9c6c3 0 1px, transparent 1px 3px) center / 8px 4px no-repeat; }

.grid { grid-area: 1 / 1; overflow: hidden; border: 1px solid var(--line); border-left-color: #cfccc9; background: #fff; }
table { table-layout: fixed; width: 0; min-width: 844px; border-collapse: separate; border-spacing: 0; }
.c-no { width: 79px; }
.c-time { width: 261px; }
.c-addr { width: 189px; }
.c-proto { width: 72px; }
.c-len { width: 54px; }
.c-info { width: 54px; }
th { height: 25px; padding: 0 0 0 4px; overflow: hidden; border-right: 1px solid #cfccc9; border-bottom: 1px solid #a9a6a2; background: linear-gradient(#fff, #f0efee); font-weight: 400; line-height: 24px; text-align: left; white-space: nowrap; }
td { position: relative; height: 18px; padding: 0 3px; overflow: hidden; font-family: var(--mono); font-size: 15px; line-height: 18px; white-space: nowrap; }
td:nth-child(1), td:nth-child(6) { text-align: right; }
.rel { position: absolute; left: 0; top: 0; width: 18px; height: 18px; color: #888; }
.dns { background: #daeeff; color: #12272e; }
.icmp { background: #fce0ff; color: #12272e; }
.arp { background: #faf0d7; color: #12272e; }
.syn { background: #a0a0a0; color: #12272e; }
.tcp { background: #e7e6ff; color: #12272e; }
.err { background: #12272e; color: #b7f774; }
.picked { background: #e3e1df; }
.picked td { box-shadow: inset 0 1px #aaa7a4, inset 0 -1px #aaa7a4; }
.selected { background: linear-gradient(#f47f50, #ec6f3c); color: #fff; }
.selected td { box-shadow: inset 0 1px #e5673a; }
.selected .rel { color: #fff; }

.sb { display: flex; border: 1px solid #b5b2ae; border-radius: 7px; background: #f6f5f4; overflow: hidden; }
.sb--v { flex-direction: column; grid-area: 1 / 3 / 3 / 4; width: 13px; }
.sb--h { grid-area: 3 / 1 / 4 / 3; }
.sb b { display: grid; place-items: center; flex: none; width: 11px; height: 11px; }
.sb b::before { content: ""; border: 3px solid transparent; }
.sb .up::before { border-bottom-color: #555; margin-top: -3px; }
.sb .down::before { border-top-color: #555; margin-top: 3px; }
.sb .left::before { border-right-color: #555; margin-left: -3px; }
.sb .right::before { border-left-color: #555; margin-left: 3px; }
.sb .dim::before { opacity: .45; }
.trough { display: flex; flex: 1; border-radius: 6px; background: #dbd9d7; }
.sb--v .trough { flex-direction: column; }
.trough span, .trough em { flex-basis: 0; }
.trough span { border-radius: 6px; box-shadow: 0 0 0 1px #98958f; }
.sb--v .trough span { background: repeating-linear-gradient(#a9a6a2 0 1px, transparent 1px 3px) center / 4px 7px no-repeat, linear-gradient(90deg, #fff, #e9e8e6); }
.sb--h .trough span { background: repeating-linear-gradient(90deg, #a9a6a2 0 1px, transparent 1px 3px) center / 7px 4px no-repeat, linear-gradient(#fff, #e9e8e6); }

.tree { flex: 1; min-width: 0; margin: 0; padding: 1px 0 0; overflow: hidden; border: 1px solid var(--line); background: #fff; list-style: none; font-family: var(--mono); font-size: 15px; line-height: 18px; }
.tree li { position: relative; padding-left: 43px; white-space: nowrap; }
.tree .d2 { padding-left: 63px; }
.tree .d3 { padding-left: 83px; }
.tree .current { background: linear-gradient(#eae9e7, #dad8d6); box-shadow: inset 0 1px #d0cecb; }
.open::before, .shut::before { content: ""; position: absolute; left: 29px; border: solid transparent; }
.open::before { top: 5px; border-width: 7px 4px 0; border-top-color: #555; }
.shut::before { top: 4px; border-width: 4px 0 4px 7px; border-left-color: #666; }
.d2::before { left: 49px; }

.status { display: flex; align-items: center; height: 22px; padding: 0 6px 0 10px; border-top: 1px solid #c9c6c3; box-shadow: inset 0 1px #fff, inset 0 2px #c9c6c3, inset 0 -1px #c9c6c3; line-height: 20px; white-space: nowrap; }
.expert { width: 14px; height: 14px; margin-right: 9px; border: 1px solid #666; border-radius: 50%; background: #a8aca6; }
.status p { flex: 1; min-width: 0; margin: 0 0 0 17px; }
.counts, .profile { padding-left: 18px; background: repeating-linear-gradient(#c9c6c3 0 1px, transparent 1px 3px) 0 center / 4px 8px no-repeat; }
.profile { margin-left: 6px; }

.vmbar { display: flex; align-items: center; justify-content: flex-end; gap: 3px; height: 21px; padding-right: 3px; background: #f0f0f0; color: #000; font-family: var(--win); font-size: 11px; }
.grip { width: 10px; height: 10px; margin: 7px 0 0 4px; }
```
